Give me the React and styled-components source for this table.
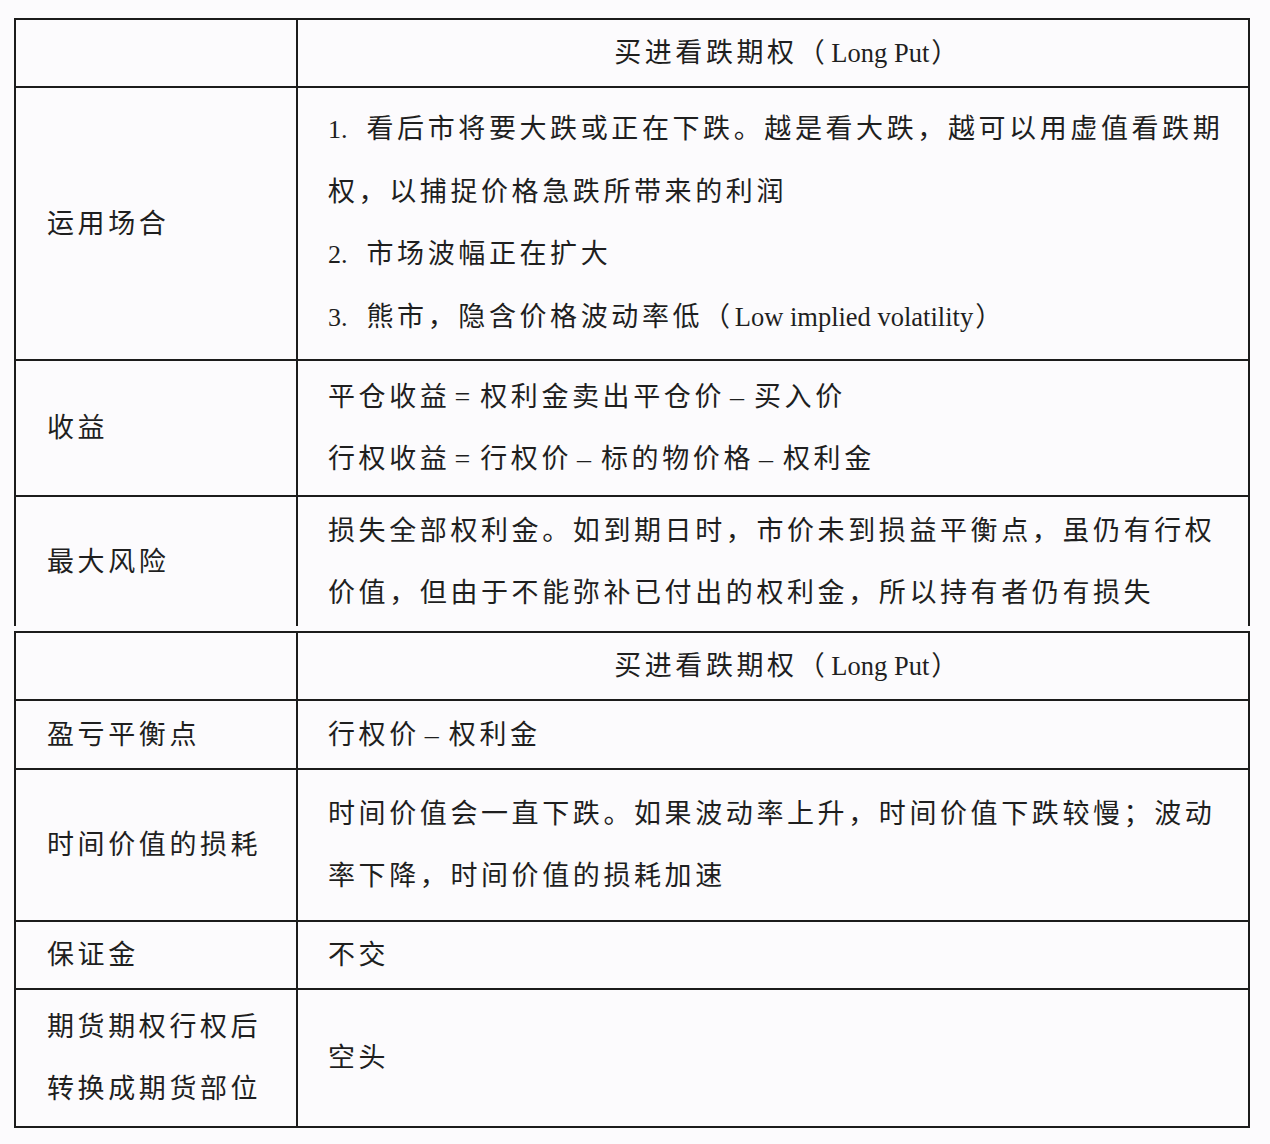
import React from 'react';
import styled, { createGlobalStyle } from 'styled-components';

const GlobalStyle = createGlobalStyle`
    html, body {
        margin: 0;
        padding: 0;
        background: #fcfbfd;
    }
    body {
        font-family: "Liberation Serif", "Noto Sans CJK SC", serif;
        color: #1f1f1f;
    }
`;

const Page = styled.div`
    padding: 0 0 14px 14px;
    display: flex;
    flex-direction: column;
`;

const Table = styled.table`
    margin-top: ${({ $gapTop }) => $gapTop}px;
    width: 1236px;
    table-layout: fixed;
    border-collapse: separate;
    border-spacing: 0;
    border-top: 2px solid #1c1c1c;
    border-left: 2px solid #1c1c1c;
`;

const Cell = styled.td`
    box-sizing: border-box;
    height: ${({ $height }) => $height}px;
    width: ${({ $label }) => ($label ? '282px' : 'auto')};
    padding: 0 0 0 ${({ $label }) => ($label ? '31px' : '30px')};
    text-align: ${({ $center }) => ($center ? 'center' : 'left')};
    vertical-align: middle;
    border-right: 2px solid #1c1c1c;
    border-bottom: ${({ $last }) => ($last ? 'none' : '2px solid #1c1c1c')};
    font-size: 27px;
    letter-spacing: 3.6px;
    white-space: nowrap;
`;

const Line = styled.div`
    line-height: 62px;
`;

const Latin = styled.span`
    letter-spacing: 0;
    font-size: 26.5px;
    font-family: "Liberation Serif", serif;
    margin: 0 2px 0 ${({ $tight }) => ($tight ? '1px' : '3px')};
`;

const Num = styled.span`
    font-family: "Liberation Serif", serif;
    font-size: 26px;
    letter-spacing: 0;
    margin-right: 19px;
`;

const Op = styled.span`
    font-family: "Liberation Serif", serif;
    font-size: 28px;
    letter-spacing: 0;
    margin: 0 10px 0 ${({ $wide }) => ($wide ? '5px' : '4px')};
`;

const tableOne = [
    {
        label: ['运用场合'],
        height: 273,
        lines: [
            [<Num key="n">1.</Num>, '看后市将要大跌或正在下跌。越是看大跌，越可以用虚值看跌期'],
            ['权，以捕捉价格急跌所带来的利润'],
            [<Num key="n">2.</Num>, '市场波幅正在扩大'],
            [<Num key="n">3.</Num>, '熊市，隐含价格波动率低（', <Latin key="l" $tight>Low implied volatility</Latin>, '）'],
        ],
    },
    {
        label: ['收益'],
        height: 136,
        lines: [
            ['平仓收益', <Op key="a">=</Op>, '权利金卖出平仓价', <Op key="b" $wide>–</Op>, '买入价'],
            ['行权收益', <Op key="a">=</Op>, '行权价', <Op key="b" $wide>–</Op>, '标的物价格', <Op key="c" $wide>–</Op>, '权利金'],
        ],
    },
    {
        label: ['最大风险'],
        height: 129,
        last: true,
        lines: [
            ['损失全部权利金。如到期日时，市价未到损益平衡点，虽仍有行权'],
            ['价值，但由于不能弥补已付出的权利金，所以持有者仍有损失'],
        ],
    },
];

const tableTwo = [
    { label: ['盈亏平衡点'], height: 69, lines: [['行权价', <Op key="a" $wide>–</Op>, '权利金']] },
    {
        label: ['时间价值的损耗'],
        height: 152,
        lines: [
            ['时间价值会一直下跌。如果波动率上升，时间价值下跌较慢；波动'],
            ['率下降，时间价值的损耗加速'],
        ],
    },
    { label: ['保证金'], height: 68, lines: [['不交']] },
    { label: ['期货期权行权后', '转换成期货部位'], height: 138, lines: [['空头']] },
];

function OptionTable({ rows, gapTop }) {
    return (
        <Table $gapTop={gapTop}>
            <tbody>
                <tr>
                    <Cell $height={68} $label />
                    <Cell $height={68} $center>
                        <Line>
                            买进看跌期权（<Latin>Long Put</Latin>）
                        </Line>
                    </Cell>
                </tr>
                {rows.map((row, i) => (
                    <tr key={i}>
                        <Cell $height={row.height} $label $last={row.last}>
                            {row.label.map((l, j) => (
                                <Line key={j}>{l}</Line>
                            ))}
                        </Cell>
                        <Cell $height={row.height} $last={row.last}>
                            {row.lines.map((parts, j) => (
                                <Line key={j}>{parts}</Line>
                            ))}
                        </Cell>
                    </tr>
                ))}
            </tbody>
        </Table>
    );
}

export default function App() {
    return (
        <Page>
            <GlobalStyle />
            <OptionTable rows={tableOne} gapTop={18} />
            <OptionTable rows={tableTwo} gapTop={5} />
        </Page>
    );
}
